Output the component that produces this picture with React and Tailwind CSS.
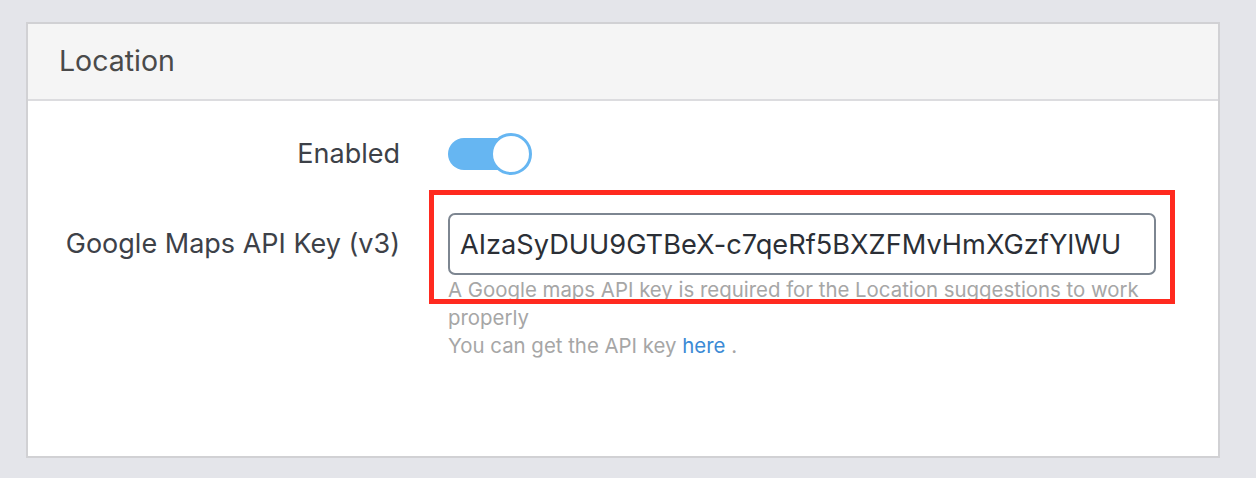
import { useState } from 'react';

const font = { fontFamily: 'Inter, "Noto Sans", sans-serif' };

function Toggle({ on, onChange }) {
  return (
    <button
      type="button"
      onClick={() => onChange(!on)}
      className="relative h-[44px] w-[86px] shrink-0"
    >
      <span
        className={`absolute left-0 top-[5px] h-[32px] w-[80px] rounded-full ${on ? 'bg-[#66b6f2]' : 'bg-[#d4d7dc]'}`}
      />
      <span
        className={`absolute top-0 h-[42px] w-[42px] rounded-full border-[3px] bg-white ${on ? 'left-[42px] border-[#66b6f2]' : 'left-0 border-[#d4d7dc]'}`}
      />
    </button>
  );
}

export default function App() {
  const [enabled, setEnabled] = useState(true);
  const [apiKey, setApiKey] = useState('AIzaSyDUU9GTBeX-c7qeRf5BXZFMvHmXGzfYlWU');

  return (
    <div className="min-h-[478px] w-full bg-[#e4e5ea] pl-[26px] pr-[36px] pt-[22px]" style={font}>
      <div className="h-[436px] border-2 border-[#d1d1d4] bg-white">
        {/* Card header */}
        <div className="flex h-[77px] items-center border-b-2 border-[#dcdcdf] bg-[#f5f5f5] px-[31px]">
          <h2 className="text-[28.5px] font-normal text-[#4a4a4a]">Location</h2>
        </div>

        {/* Card body */}
        <div className="flex flex-col gap-[36px] pt-[32px]">
          <div className="flex items-center gap-[48px]">
            <label className="w-[372px] pb-[3px] text-right text-[27px] leading-[40px] text-[#3d4148]">Enabled</label>
            <Toggle on={enabled} onChange={setEnabled} />
          </div>

          <div className="flex items-start gap-[48px]">
            <label className="w-[372px] pt-[11px] text-right text-[27px] leading-[40px] text-[#3d4148]">
              Google Maps API Key (v3)
            </label>
            <div className="relative w-[708px]">
              <input
                value={apiKey}
                onChange={(e) => setApiKey(e.target.value)}
                className="block h-[62px] w-full rounded-[7px] border-2 border-[#7d8691] bg-white px-[10px] text-[27.2px] text-[#2b2f36] outline-none"
              />
              <div className="mt-[1px] text-[20.4px] leading-[28px] text-[#a6a6a6]">
                <p>A Google maps API key is required for the Location suggestions to work properly</p>
                <p>
                  You can get the API key <a href="#" className="text-[#3b8ad5]">here</a> .
                </p>
              </div>
              {/* highlight annotation */}
              <div className="pointer-events-none absolute left-[-19px] right-[-19px] top-[-23px] h-[114px] border-[5px] border-[#ff2a1f]" />
            </div>
          </div>
        </div>
      </div>
    </div>
  );
}
